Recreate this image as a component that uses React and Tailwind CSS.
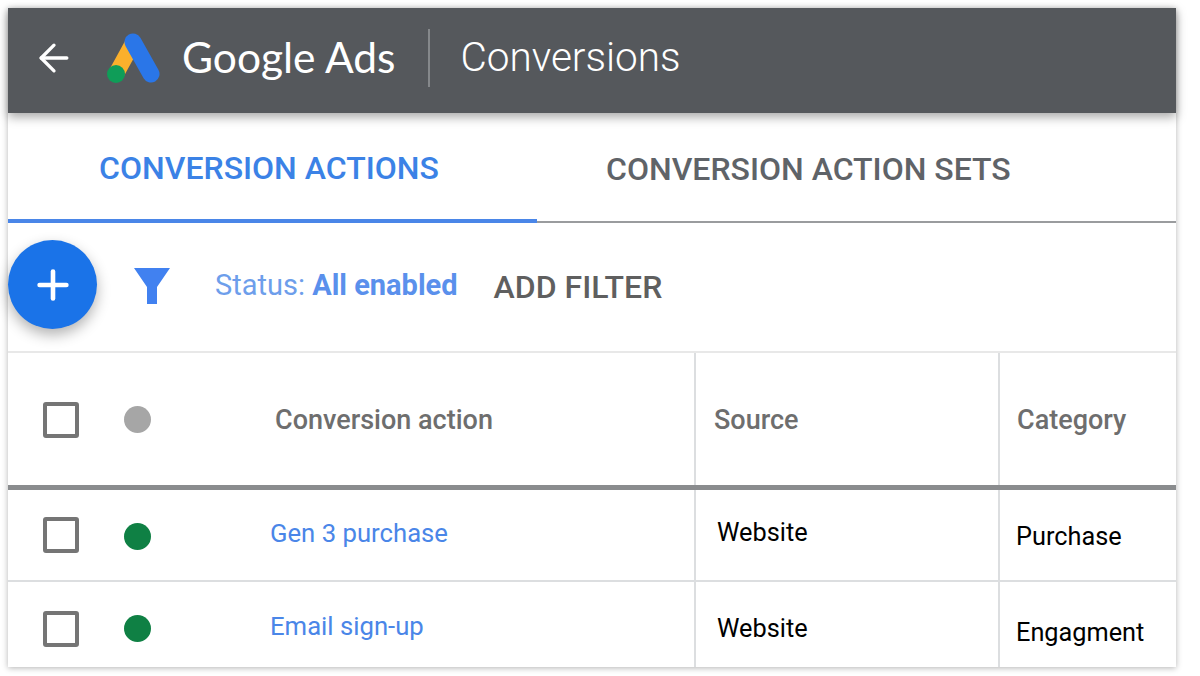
import { ArrowLeft, Plus } from "lucide-react";

const Checkbox = () => (
  <span className="block w-9 h-9 rounded-[3px] border-[4px] border-[#757575] bg-white" />
);

const Dot = ({ color }) => <span className={`block w-[27px] h-[27px] rounded-full ${color}`} />;

function AdsLogo() {
  return (
    <svg width="54" height="50" viewBox="0 0 54 50" className="block">
      <path d="M9 41 L26 10" stroke="#fbb02c" strokeWidth="16" strokeLinecap="round" />
      <path d="M26 9 L44 41" stroke="#2a76e8" strokeWidth="17" strokeLinecap="round" />
      <circle cx="9" cy="41" r="9" fill="#0f9d58" />
    </svg>
  );
}

function Row({ name, category, height, border, boxPad, dotPad, namePad, sourcePad, catPad }) {
  return (
    <div className={`flex ${height} ${border}`}>
      <div className="w-[688px] flex items-center border-r-2 border-[#dcdee0] shrink-0">
        <div className={`pl-[35px] mr-[45px] ${boxPad}`}>
          <Checkbox />
        </div>
        <div className={dotPad}>
          <Dot color="bg-[#0f8044]" />
        </div>
        <a className={`ml-[119px] text-[25.7px] text-[#4a86e8] ${namePad}`}>{name}</a>
      </div>
      <div className={`w-[304px] flex items-center pl-[21px] border-r-2 border-[#dcdee0] shrink-0 text-[25.3px] text-black ${sourcePad}`}>
        Website
      </div>
      <div className={`flex-1 flex items-center pl-4 text-[25.3px] text-black ${catPad}`}>
        {category}
      </div>
    </div>
  );
}

export default function App() {
  return (
    <div className="w-[1200px] h-[676px] bg-white p-2 overflow-hidden" style={{ fontFamily: "Roboto, sans-serif" }}>
      <div className="w-[1168px] h-[659px] bg-white shadow-[0_1px_6px_rgba(0,0,0,0.3)] flex flex-col">
        {/* Header */}
        <header className="h-[105px] shrink-0 bg-[#55585c] flex items-center pb-[6px] text-white shadow-[0_4px_10px_rgba(0,0,0,0.35)] relative z-10">
          <ArrowLeft className="ml-6 w-11 h-11" strokeWidth={1.8} />
          <div className="ml-[31px]">
            <AdsLogo />
          </div>
          <span className="ml-[21px] text-[42.5px] leading-none" style={{ fontFamily: "Lato, sans-serif" }}>
            Google Ads
          </span>
          <span className="ml-[33px] w-0.5 h-[58px] bg-[#85888b]" />
          <span className="ml-[30px] text-[40.5px] font-light leading-none">Conversions</span>
        </header>

        {/* Tabs */}
        <div className="h-[110px] shrink-0 flex border-b-2 border-[#9a9c9e] text-[32px] font-medium relative">
          <div className="w-[529px] flex items-center justify-center pt-[3px] pr-[7px] text-[#3b82e6] border-b-4 border-[#4a86e8] -mb-0.5">
            CONVERSION ACTIONS
          </div>
          <div className="ml-[69px] flex items-center pt-[3px] text-[#5f6368]">CONVERSION ACTION SETS</div>
        </div>

        {/* Filter bar */}
        <div className="h-[130px] shrink-0 flex items-center border-b-2 border-[#e8e8e8]">
          <button className="w-[89px] h-[89px] rounded-full bg-[#1a73e8] flex items-center justify-center shadow-[0_6px_14px_rgba(0,0,0,0.3)] -mt-[5px]">
            <Plus className="w-[46px] h-[46px] text-white" strokeWidth={2.4} />
          </button>
          <svg width="38" height="38" viewBox="0 0 38 38" className="ml-[36px] -mt-[3px]">
            <path d="M1 1 H37 L24 20 V37 H14 V20 Z" fill="#4181f0" />
          </svg>
          <span className="ml-[44px] pb-[2px] text-[29px] text-[#6d9eeb]">
            Status: <b className="font-bold text-[#5a90ec]">All enabled</b>
          </span>
          <span className="ml-[36px] text-[32px] font-medium text-[#5f5f5f]">ADD FILTER</span>
        </div>

        {/* Table head */}
        <div className="h-[137px] shrink-0 flex border-b-[5px] border-[#8a8c8e] text-[27px] font-medium text-[#6e6e6e]">
          <div className="w-[688px] flex items-center border-r-2 border-[#dcdee0] shrink-0">
            <div className="pl-[35px] mr-[45px] pt-0.5">
              <Checkbox />
            </div>
            <Dot color="bg-[#a6a6a6]" />
            <span className="ml-[124px] pt-0.5">Conversion action</span>
          </div>
          <div className="w-[304px] flex items-center pl-[18px] pt-0.5 border-r-2 border-[#dcdee0] shrink-0">Source</div>
          <div className="flex-1 flex items-center pl-[17px] pt-0.5">Category</div>
        </div>

        {/* Rows */}
        <Row
          name="Gen 3 purchase"
          category="Purchase"
          height="h-[92px]"
          border="border-b-2 border-[#dcdee0]"
          dotPad="pt-0.5"
          namePad="pb-1"
          sourcePad="pb-1"
          catPad="pt-1"
        />
        <Row
          name="Email sign-up"
          category="Engagment"
          height="flex-1"
          boxPad="pt-2"
          dotPad="pt-2"
          namePad="pt-1"
          sourcePad="pt-2"
          catPad="pt-4"
        />
      </div>
    </div>
  );
}
